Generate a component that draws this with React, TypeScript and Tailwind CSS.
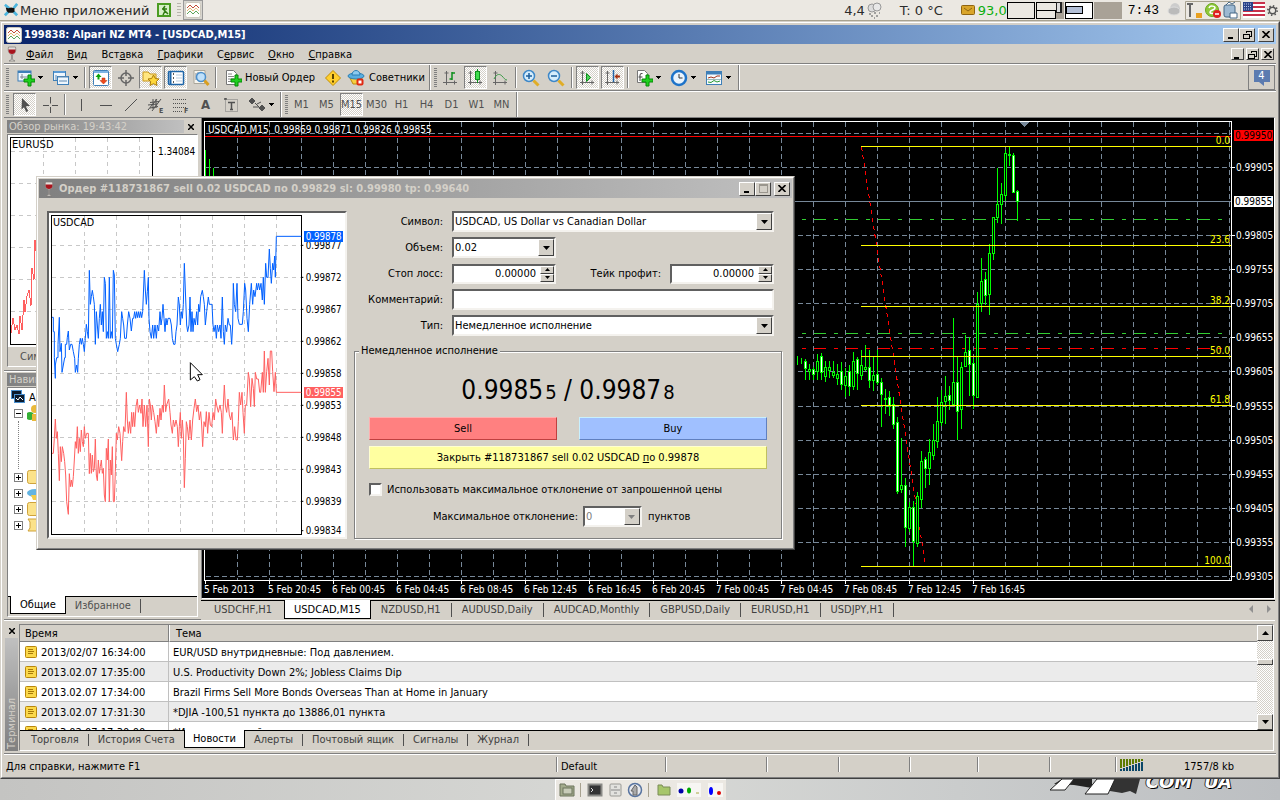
import { useState, type ReactNode } from 'react';
import clsx from 'clsx';

const RAISED = 'border border-t-white border-l-white border-r-[#404040] border-b-[#404040] bg-[#d4d0c8]';
const SUNKEN = 'border border-t-[#808080] border-l-[#808080] border-r-white border-b-white';
const FIELD = 'border-2 border-t-[#606060] border-l-[#606060] border-r-[#f4f2ee] border-b-[#f4f2ee] bg-white';
const CHECKER = 'bg-[repeating-conic-gradient(#fff_0_25%,#d4d0c8_0_50%)] bg-[length:2px_2px]';

const MENU = [
  ['', 'Ф', 'айл'],
  ['', 'В', 'ид'],
  ['Вст', 'а', 'вка'],
  ['', 'Г', 'рафики'],
  ['С', 'е', 'рвис'],
  ['', 'О', 'кно'],
  ['', 'С', 'правка'],
];

const TIMEFRAMES = ['M1', 'M5', 'M15', 'M30', 'H1', 'H4', 'D1', 'W1', 'MN'];

const CHART_TABS = ['USDCHF,H1', 'USDCAD,M15', 'NZDUSD,H1', 'AUDUSD,Daily', 'AUDCAD,Monthly', 'GBPUSD,Daily', 'EURUSD,H1', 'USDJPY,H1'];

const TERMINAL_TABS = ['Торговля', 'История Счета', 'Новости', 'Алерты', 'Почтовый ящик', 'Сигналы', 'Журнал'];

const NEWS = [
  { time: '2013/02/07 16:34:00', title: 'EUR/USD внутридневные: Под давлением.' },
  { time: '2013.02.07 17:35:00', title: 'U.S. Productivity Down 2%; Jobless Claims Dip' },
  { time: '2013.02.07 17:34:00', title: 'Brazil Firms Sell More Bonds Overseas Than at Home in January' },
  { time: '2013.02.07 17:31:30', title: '*DJIA -100,51 пункта до 13886,01 пункта' },
  { time: '2013.02.07 17:30:00', title: '*Индекс деловой активности' },
];

// x, high, low, body top, body bottom, filled
const CANDLES: [number, number, number, number, number, number][] = [
  [797, 356, 365, 361, 361, 0], [801, 358, 364, 360, 360, 0], [805, 359, 380, 361, 368, 1], [809, 364, 380, 369, 371, 0],
  [813, 367, 380, 369, 374, 1], [817, 354, 380, 361, 371, 0], [821, 353, 380, 356, 372, 1], [825, 361, 382, 367, 376, 0],
  [829, 361, 378, 367, 370, 0], [833, 361, 378, 372, 375, 0], [837, 364, 385, 374, 378, 0], [841, 362, 390, 371, 384, 1],
  [845, 368, 397, 376, 385, 0], [849, 365, 396, 371, 386, 1], [853, 352, 390, 361, 386, 0], [857, 357, 390, 359, 373, 1],
  [861, 350, 380, 365, 375, 0], [865, 345, 371, 367, 369, 0], [869, 350, 388, 367, 380, 1], [873, 356, 391, 375, 380, 0],
  [877, 350, 385, 374, 382, 1], [881, 378, 427, 382, 394, 1], [885, 389, 414, 398, 399, 0], [889, 391, 416, 397, 406, 1],
  [893, 397, 429, 404, 424, 1], [897, 417, 494, 422, 491, 1], [901, 438, 493, 485, 489, 0], [905, 478, 547, 485, 527, 1],
  [909, 502, 532, 507, 528, 0], [913, 501, 567, 507, 541, 1], [917, 492, 547, 496, 543, 0], [921, 451, 508, 461, 499, 0],
  [925, 457, 488, 459, 468, 1], [929, 439, 485, 452, 468, 0], [933, 424, 460, 440, 455, 0], [937, 397, 448, 421, 441, 0],
  [941, 390, 426, 402, 422, 0], [945, 376, 424, 396, 401, 0], [949, 386, 410, 395, 400, 1], [953, 318, 405, 382, 404, 0],
  [957, 356, 440, 382, 411, 1], [961, 362, 429, 367, 409, 0], [965, 335, 366, 352, 366, 0], [969, 337, 396, 350, 364, 1],
  [973, 359, 409, 363, 395, 1], [977, 292, 397, 304, 397, 0], [981, 258, 312, 281, 303, 0], [985, 272, 305, 279, 295, 1],
  [989, 244, 315, 253, 294, 0], [993, 217, 260, 217, 253, 0], [997, 168, 223, 204, 217, 0], [1001, 183, 224, 194, 204, 0],
  [1005, 150, 201, 153, 195, 0], [1009, 146, 166, 154, 155, 0], [1013, 153, 193, 155, 192, 1], [1017, 190, 221, 191, 201, 1],
];

const PRICES: [string, number][] = [
  ['0.99905', 167], ['0.99805', 235], ['0.99755', 269], ['0.99705', 303], ['0.99655', 337], ['0.99605', 371],
  ['0.99555', 406], ['0.99505', 440], ['0.99455', 474], ['0.99405', 508], ['0.99355', 542], ['0.99305', 576],
];

const FIBO: [string, number][] = [['0.0', 146], ['23.6', 245], ['38.2', 306], ['50.0', 356], ['61.8', 405], ['100.0', 566]];

const DATES = [
  '5 Feb 2013', '5 Feb 20:45', '6 Feb 00:45', '6 Feb 04:45', '6 Feb 08:45', '6 Feb 12:45', '6 Feb 16:45',
  '6 Feb 20:45', '7 Feb 00:45', '7 Feb 04:45', '7 Feb 08:45', '7 Feb 12:45', '7 Feb 16:45',
];

const ASK = '36,427 40,427 40,470 43,470 43,548 46,610 46,570 50,548 54,548 54,508 58,427 60,530 64,505 66,592 70,570 74,548 76,548 76,508 80,508 82,487 85,468 88,525 92,508 96,508 100,530 104,550 106,592 110,570 113,592 115,550 118,508 121,490 124,508 127,490 130,508 133,530 136,490 139,448 142,470 145,490 148,286 151,388 154,365 157,346 160,365 163,388 166,508 169,410 172,450 175,490 178,430 181,388 184,450 187,410 190,470 193,307 196,325 199,490 202,470 205,490 208,307 211,490 214,470 217,490 220,286 223,300 226,490 229,508 233,530 238,508 241,490 245,410 248,430 251,450 254,490 259,490 262,450 266,410 270,430 274,468 278,430 281,430 284,410 287,430 290,410 293,428 296,410 299,428 302,410 305,428 308,410 313,286 316,345 319,388 322,350 325,307 327,430 330,470 334,490 338,450 341,490 345,450 349,490 352,450 356,468 360,410 363,450 366,430 369,388 372,430 375,470 378,430 381,450 384,430 390,430 394,450 397,490 401,508 405,508 408,470 411,450 415,366 418,390 421,450 424,410 427,430 430,388 433,265 436,345 440,450 443,470 447,450 450,366 453,470 456,410 459,470 462,430 466,450 470,410 473,450 476,388 479,410 482,365 487,346 490,365 493,388 496,450 500,410 505,366 508,388 516,388 519,450 522,470 526,450 529,490 532,450 536,470 540,450 543,490 547,366 550,470 553,508 556,450 560,470 564,430 568,450 571,450 575,508 578,450 580,325 583,388 587,410 591,325 594,430 598,448 607,448 610,410 614,325 617,345 621,430 625,470 629,388 634,325 638,388 641,345 645,365 650,325 652,345 656,325 659,345 663,325 667,375 670,307 673,388 677,265 680,307 684,307 688,222 691,280 694,325 698,265 701,285 704,243 706,307 709,184 784,184';

const BID = '36,835 40,835 43,790 46,732 49,790 52,770 55,835 58,917 61,815 64,860 67,815 71,835 74,860 77,900 80,980 85,1018 88,896 91,935 94,915 97,935 100,905 103,855 106,800 109,820 112,755 115,835 118,790 121,830 124,765 127,800 130,815 133,755 136,790 140,775 145,775 148,896 151,835 154,895 157,840 160,890 163,880 166,792 169,900 172,917 175,855 178,895 181,875 184,855 187,895 190,880 193,960 196,980 199,820 202,855 205,792 208,980 211,855 214,900 217,815 220,980 223,980 226,890 229,775 232,795 236,755 240,775 245,857 248,800 251,755 255,770 259,652 262,735 265,775 268,740 272,775 275,712 278,755 281,712 284,755 288,695 292,672 295,712 299,690 303,715 306,672 309,755 313,690 317,755 321,690 325,815 328,672 331,690 334,735 337,690 341,712 345,740 349,775 353,720 356,755 360,700 363,735 367,690 370,712 373,630 377,710 380,690 386,672 390,712 393,750 397,775 400,735 404,755 408,735 412,755 415,815 418,755 421,712 424,790 427,735 430,780 433,938 436,850 439,740 442,755 446,795 450,735 454,795 458,735 462,700 466,672 470,710 474,690 478,735 482,710 485,750 488,815 492,740 496,755 499,710 503,775 507,712 511,750 515,755 519,712 523,735 527,672 530,690 535,712 540,690 544,712 547,775 550,690 553,630 556,690 560,712 564,672 568,720 572,735 576,712 580,795 584,755 588,795 592,795 595,740 598,652 602,690 606,652 609,712 613,775 616,690 620,690 625,592 628,612 632,695 636,610 640,640 643,695 646,592 650,612 655,612 659,652 662,652 667,592 670,652 673,528 676,652 680,590 684,550 688,630 691,528 695,528 698,590 702,650 706,592 709,652 784,652';

function Svg({ children, size = 18 }: { children: ReactNode; size?: number }) {
  return (
    <svg width={size} height={size} viewBox="0 0 18 18" fill="none" className="shrink-0" aria-hidden="true">
      {children}
    </svg>
  );
}

const PLUS = <path d="M11 6h3v4h4v3h-4v4h-3v-4H7v-3h4z" fill="#1fd01f" stroke="#078a07" />;

const icons: Record<string, ReactNode> = {
  newChart: <Svg><rect x="1" y="2" width="13" height="10" fill="#eef6fd" stroke="#3e7fb8" /><path d="M1 3h13" stroke="#3e7fb8" strokeWidth="2" /><path d="M3 8h8M5 5v5" stroke="#7e8790" />{PLUS}</Svg>,
  profiles: <Svg><rect x="1.500" y="2.500" width="12" height="9" fill="#eef6fd" stroke="#3e7fb8" /><path d="M2 3h11" stroke="#5c9bd5" strokeWidth="2" /><rect x="5.500" y="7.500" width="11" height="8" fill="#eef6fd" stroke="#3e7fb8" /><path d="M6 8h10M4 6v5M7 12h8" stroke="#5c88b0" /></Svg>,
  market: <Svg><rect x="1.500" y="1.500" width="15" height="15" rx="1" fill="#fff" stroke="#3e7fb8" /><path d="M2 3h14" stroke="#7db4e4" strokeWidth="2" /><path d="M6.500 4.500l3 3.500h-2v2.500h-2V8h-2z" fill="#0ba30b" /><path d="M11.500 15l3.500-3.500h-2V9h-3v2.500H8z" fill="#f04a1c" stroke="#b32d08" strokeWidth=".5" /></Svg>,
  target: <Svg><circle cx="9" cy="9" r="5" stroke="#666" strokeWidth="1.500" /><path d="M9 1v6M9 11v6M1 9h6M11 9h6" stroke="#666" strokeWidth="1.500" /></Svg>,
  favorites: <Svg><path d="M1 3h5l2 2h6v7H1z" fill="#ffe680" stroke="#c9971b" /><path d="M11.500 6l1.800 3.500 3.700.500-2.700 2.600.700 3.900-3.500-1.800L8 16.500l.700-3.900L6 10l3.700-.500z" fill="#ffd83a" stroke="#a97a08" /></Svg>,
  terminal: <Svg><rect x="1.500" y="2.500" width="15" height="13" rx="1" fill="#fff" stroke="#1d65a8" strokeWidth="1.500" /><path d="M3.500 3v12" stroke="#1d65a8" strokeWidth="2" /><path d="M6 5h1M6 9h1M6 13h1" stroke="#222" strokeWidth="1.500" /><path d="M9 6h6M9 9h6M9 12h6" stroke="#b9cde0" /></Svg>,
  tester: <Svg><path d="M2 1.500h11v13H2z" fill="#f7f5ee" stroke="#aaa69a" /><path d="M4 4v7M6 3v4" stroke="#7e8790" /><circle cx="9" cy="8" r="4.500" fill="#bfe0fa" stroke="#4b8fcc" strokeWidth="1.500" /><path d="M12.500 11.500l4 4.500" stroke="#d99e1e" strokeWidth="3" /></Svg>,
  order: <Svg><path d="M2.500 1.500h7l3 3v11h-10z" fill="#fff" stroke="#777" /><path d="M4 5h4M4 7.500h6M4 10h6M4 12.500h4" stroke="#888" />{PLUS}</Svg>,
  warn: <Svg><path d="M9 1.500L16.500 9 9 16.500 1.500 9z" fill="#ffcf2e" stroke="#c48f00" strokeLinejoin="round" /><path d="M9 5v5M9 11.500v2" stroke="#5b4300" strokeWidth="2" /></Svg>,
  experts: <Svg><path d="M3 9h12l-2 6H6z" fill="#f6cf3f" stroke="#b98a0d" /><ellipse cx="9" cy="7" rx="8" ry="3" fill="#58aee0" stroke="#2d7fb4" /><path d="M5 6c0-6 8-6 8 0z" fill="#8ccbf0" stroke="#2d7fb4" /><rect x="9.500" y="9.500" width="7" height="7" rx="2" fill="#e02a12" /><rect x="11.500" y="11.500" width="3" height="3" fill="#fff" /></Svg>,
  bars: <Svg><path d="M5.500 2v14M2 13.500h14M3.500 4h4M13.500 11.500v4" stroke="#666" /><path d="M11 3v8M11 4h3M8.500 10H11" stroke="#0c8f1c" strokeWidth="1.500" /></Svg>,
  candles: <Svg><path d="M4.500 2v14M2 13.500h14M2.500 4h4M14 11.500v4" stroke="#666" /><path d="M11.500 0v14" stroke="#0c8f1c" /><rect x="9.500" y="2.500" width="4" height="8" fill="#3fdc4d" stroke="#0c8f1c" /></Svg>,
  line: <Svg><path d="M4.500 2v14M2 13.500h14M2.500 4h4M14 11.500v4" stroke="#666" /><path d="M3 10c3-6 6-5 8-3s3 4 5 4" stroke="#3a9a45" /></Svg>,
  zoomIn: <Svg><circle cx="7" cy="7" r="5.500" fill="#d6edfc" stroke="#3e88c8" strokeWidth="1.500" /><path d="M4 7h6M7 4v6" stroke="#1d5f9c" strokeWidth="1.500" /><path d="M11.500 11.500l5 5" stroke="#e0ad27" strokeWidth="3" /></Svg>,
  zoomOut: <Svg><circle cx="7" cy="7" r="5.500" fill="#d6edfc" stroke="#3e88c8" strokeWidth="1.500" /><path d="M4 7h6" stroke="#1d5f9c" strokeWidth="1.500" /><path d="M11.500 11.500l5 5" stroke="#e0ad27" strokeWidth="3" /></Svg>,
  scroll: <Svg><path d="M4.500 2v14M2 13.500h14M2.500 4h4M14 11.500v4" stroke="#666" /><path d="M8.500 4.500v8l4-4z" fill="#4bd457" stroke="#0c8f1c" /></Svg>,
  shift: <Svg><path d="M4.500 2v14M2 13.500h14M2.500 4h4M14 11.500v4" stroke="#666" /><path d="M10.500 1v12" stroke="#2264a8" strokeWidth="1.500" /><path d="M11.500 7.500l3-3v2h2.500v2h-2.500v2z" fill="#a5300f" /></Svg>,
  indicators: <Svg><path d="M2.500 1.500h7l3 3v9h-10z" fill="#fff" stroke="#777" /><path d="M5 12V6q0-2 2.500-1.500M3.500 8h4" stroke="#444" />{PLUS}</Svg>,
  clock: <Svg><circle cx="9" cy="9" r="7" fill="#eaf4fd" stroke="#1d73c9" strokeWidth="2.500" /><path d="M9 5v4h3.500" stroke="#333" /></Svg>,
  template: <Svg><rect x="1.500" y="2.500" width="15" height="13" fill="#f4f9fd" stroke="#3e7fb8" /><path d="M2 4h14" stroke="#3e7fb8" strokeWidth="3" /><path d="M3 9l3-1 3 1 3-2h3" stroke="#a33218" /><path d="M2 10.500h14" stroke="#9bb" /><path d="M3 13l3 .500 3-2 3 1.500 3-1" stroke="#2a9a35" /></Svg>,
  cursor: <Svg><path d="M6 2l8 8-4.200.300 2.400 4.700-2 1-2.200-4.800L5.500 13.500z" fill="#505050" /></Svg>,
  cross: <Svg><path d="M9.500 1v6.500M9.500 11v6M2 9.500h6M11 9.500h6" stroke="#505050" /></Svg>,
  vline: <Svg><path d="M9.500 3v12" stroke="#505050" /></Svg>,
  hline: <Svg><path d="M3 9.500h12" stroke="#505050" /></Svg>,
  trend: <Svg><path d="M3 15L15 3" stroke="#505050" /></Svg>,
  channel: <Svg><path d="M1 14l9-11M5 15l9-12M1 9l9-1M3 6.500l9-1M3 12l8-1.500M6 3v10M9 3v9" stroke="#505050" /><text x="12" y="17" fontSize="7" fontWeight="bold" fill="#505050">E</text></Svg>,
  fibo: <Svg><path d="M1 3.500h14M1 7.500h14M1 11.500h14M1 15.500h9" stroke="#505050" strokeDasharray="1 1" /><text x="12" y="17" fontSize="7" fontWeight="bold" fill="#505050">F</text></Svg>,
  label: <Svg><rect x="3.500" y="3.500" width="12" height="12" stroke="#777" strokeDasharray="1 1" /><path d="M2 3h2v-1M6 6.500h7M9.500 6.500v7M8 13.500h3" stroke="#505050" strokeWidth="1.500" /></Svg>,
  arrows: <Svg><path d="M4 2l3 3-3 3-3-3zM7 7l4 4M14 9l3 3-3 3-3-3z" fill="#505050" stroke="#505050" /><path d="M5 11h6M13 6l-4 2" stroke="#505050" /></Svg>,
};

function Caret() {
  return (
    <svg width="5" height="3" viewBox="0 0 5 3" className="shrink-0" shapeRendering="crispEdges" aria-hidden="true">
      <path d="M0 0h5L2.500 3z" fill="#000" />
    </svg>
  );
}

function Grip() {
  return <span className="my-[3px] w-[3px] shrink-0 self-stretch bg-[repeating-linear-gradient(#808080_0_1px,#d4d0c8_1px_2px)]" />;
}

function Sep() {
  return <span className="mx-px my-0.5 w-[2px] shrink-0 self-stretch border-l border-l-[#808080] border-r border-r-white" />;
}

function End() {
  return <span className="mx-px w-[2px] shrink-0 self-stretch border-l border-l-[#808080] border-r border-r-white" />;
}

function Tool({ icon, label, pressed, children }: { icon?: string; label: string; pressed?: boolean; children?: ReactNode }) {
  return (
    <button
      aria-label={label}
      className={clsx('flex h-[23px] w-[23px] shrink-0 items-center justify-center', pressed && SUNKEN, pressed && CHECKER)}
    >
      {icon && icons[icon]}
      {children}
    </button>
  );
}

function DropTool({ icon, label }: { icon: string; label: string }) {
  return (
    <button aria-label={label} className="flex h-[23px] w-[33px] shrink-0 items-center justify-center gap-[3px]">
      {icons[icon]}
      <Caret />
    </button>
  );
}

function Wine() {
  return (
    <svg width="12" height="16" viewBox="0 0 12 16" className="shrink-0" aria-hidden="true">
      <path d="M2.500 1h7c1 5-1 7-3 7.500v5l2.500 1.500H3l2.500-1.500v-5C3.500 8 1.500 6 2.500 1z" fill="#e4e0dc" stroke="#7d7876" strokeWidth=".7" />
      <path d="M2.500 3.500h7c.300 3-1.500 4.500-3.500 4.500S2.200 6.500 2.500 3.500z" fill="#a8131c" />
    </svg>
  );
}

function WinButtons({ small, middle = 'restore' }: { small?: boolean; middle?: 'restore' | 'max' }) {
  const box = clsx('flex items-center justify-center', RAISED, small ? 'h-3 w-[13px]' : 'h-3.5 w-4');
  return (
    <div className="ml-auto flex shrink-0 items-center">
      <button aria-label="Свернуть" className={clsx(box, small && 'mr-0.5')}>
        <svg width="9" height="9" viewBox="0 0 9 9" shapeRendering="crispEdges"><path d="M1 7h5v2H1z" /></svg>
      </button>
      <button aria-label="Развернуть" className={box}>
        <svg width="9" height="9" viewBox="0 0 9 9" shapeRendering="crispEdges" fill="none">
          {middle === 'restore' ? (
            <path d="M3 1.500h5.500V6H7M3 1v2M.500 4.500h6v4h-6zM0 4h7" stroke="#000" />
          ) : (
            <path d="M.500 .500h8v8h-8zM1 1.500h7" stroke="#9a968e" />
          )}
        </svg>
      </button>
      <button aria-label="Закрыть" className={clsx(box, small ? 'ml-0.5' : 'ml-[3px]')}>
        <svg width="8" height="7" viewBox="0 0 8 7"><path d="M.500 0l7 7M7.500 0l-7 7" stroke="#000" strokeWidth="1.600" /></svg>
      </button>
    </div>
  );
}

function TopPanel() {
  return (
    <header className="flex h-[21px] items-center border-b border-[#a8a290] bg-[#ebe8e2] font-['DejaVu_Sans',sans-serif] text-[13px] text-[#2c2c2c]">
      <svg width="14" height="14" viewBox="0 0 16 16" className="mr-0.5 ml-1 shrink-0" aria-hidden="true">
        <path d="M1 2l5 4M15 1l-4 5M1 14l4-4M15 14l-4-4" stroke="#4cb5dd" strokeWidth="3" />
        <path d="M2 5l3 1 3-1 4 1v4l-2 1H5L3 9z" fill="#111" />
      </svg>
      <button>Меню приложений</button>
      <svg width="14" height="14" viewBox="0 0 14 14" className="ml-2 shrink-0" aria-hidden="true">
        <rect width="14" height="14" fill="#4b9c22" />
        <path d="M2 2h10v10H2z" fill="#d7efc8" />
        <path d="M8 3l-2 3 2 2-2 4M5 6h5M8 8l3 3" stroke="#2f7a10" strokeWidth="1.500" fill="none" />
      </svg>
      <span className="ml-1.5 h-3.5 w-1 bg-[repeating-linear-gradient(#b8b4ac_0_1px,#ebe8e2_1px_3px)]" />
      <span className="ml-0.5 flex h-5 w-5 items-center justify-center border border-[#999] bg-[#d8d6d0]">
        <Logo />
      </span>
      <div className="ml-auto flex items-center pr-0.5">
        <span>4,4</span>
        <svg width="17" height="17" viewBox="0 0 17 17" className="mr-[17px] ml-px" aria-hidden="true">
          <circle cx="6" cy="6" r="4" fill="#ddd" stroke="#999" />
          <circle cx="11" cy="5" r="4" fill="#e8e8e8" stroke="#999" />
          <path d="M3 12h2M8 11h2M13 11h1M5 14h2M10 14h2M8 16h1" stroke="#888" strokeWidth="1.500" />
        </svg>
        <span>T: 0 °C</span>
        <svg width="14" height="10" viewBox="0 0 14 10" className="mr-[3px] ml-[18px]" aria-hidden="true">
          <rect x=".500" y=".500" width="13" height="9" rx="1" fill="#d9a52a" stroke="#8f6410" />
          <path d="M3 3l4 3 4-3" stroke="#8f6410" fill="none" />
        </svg>
        <span className="text-[#0cae0c]">93,0</span>
        <svg width="115" height="18" viewBox="0 0 115 18" shapeRendering="crispEdges" aria-hidden="true">
          <path d="M.500 1h27v16H.500z" fill="#ebe8e2" stroke="#000" />
          <path d="M29 1h28v17H29z" fill="#a9a297" />
          <path d="M29.500 1.500h20v8h-20zM29.500 9.500h19v8h-19z" fill="#ebe8e2" stroke="#000" />
          <path d="M49 1h6v11h-6z" fill="#222" />
          <path d="M50 2h3v9h-3z" fill="#ddd" />
          <path d="M58.500 1h27v16h-27z" fill="#fff" stroke="#000" />
          <path d="M59.500 5.500h16v7h-16z" fill="#b3bfd6" stroke="#000" />
          <path d="M87 1h28v17H87z" fill="#a9a297" />
        </svg>
        <time className="mr-2 ml-1.5 font-['Liberation_Mono',monospace] text-[13px] text-black">7:43</time>
        <svg width="14" height="14" viewBox="0 0 14 14" aria-hidden="true">
          <ellipse cx="8" cy="6" rx="5" ry="6" fill="#ccc" />
          <ellipse cx="7" cy="8" rx="6" ry="4" fill="#bbb" stroke="#ddd" />
        </svg>
        <svg width="56" height="19" viewBox="0 0 56 19" className="ml-1" aria-hidden="true">
          <path d="M.500 .500h55v18H.500z" fill="none" stroke="#a8a290" />
          <path d="M2 3h6M5 3v13" stroke="#666" strokeWidth="2" />
          <rect x="11" y="12" width="6" height="5" fill="#e8a020" />
          <circle cx="27" cy="9" r="6.500" fill="#8fc93a" stroke="#6aa51e" />
          <path d="M24 7c1-3 6-2 6 0s-5 2-5 4 4 2 5 0" stroke="#fff" strokeWidth="1.500" fill="none" />
          <circle cx="32" cy="13" r="4" fill="#e02020" />
          <path d="M30 13h4" stroke="#fff" strokeWidth="1.500" />
          <rect x="39" y="4" width="11" height="12" rx="2" fill="#9db9d2" stroke="#456784" />
          <path d="M41 4l3-3 3 2 3-2M45 17v-5h7v5z" stroke="#456784" fill="#fff" />
        </svg>
        <svg width="22" height="16" viewBox="0 0 22 16" className="ml-0.5" aria-hidden="true">
          <rect width="22" height="16" fill="#fff" />
          <path d="M0 1h22M0 5h22M0 9h22M0 13h22" stroke="#c8304a" strokeWidth="2" />
          <rect width="10" height="9" fill="#2a4288" />
          <path d="M1 2h8M1 4.500h8M1 7h8" stroke="#b9c4e4" strokeDasharray="1 1" />
        </svg>
        <svg width="11" height="11" viewBox="0 0 12 12" className="ml-0.5" aria-hidden="true">
          <circle cx="6" cy="6" r="3.500" fill="none" stroke="#555" strokeWidth="1.500" />
          <circle cx="6" cy="6" r="5" fill="none" stroke="#555" strokeWidth="2" strokeDasharray="1.500 2.400" />
        </svg>
      </div>
    </header>
  );
}

function Logo() {
  return (
    <svg width="16" height="16" viewBox="0 0 16 16" className="shrink-0" aria-hidden="true">
      <rect x=".500" y=".500" width="15" height="15" rx="2" fill="#fdfdfa" stroke="#ccc8bd" />
      <path d="M2 6l3-3 3 3 3-3 3 3" stroke="#c04a35" fill="none" />
      <path d="M2 9l3-3 3 3 3-3 3 3" stroke="#d8963c" fill="none" strokeDasharray="1 .500" />
      <path d="M2 12l3-3 3 3 3-3 3 3" stroke="#5ba35b" fill="none" />
    </svg>
  );
}

function Toolbars() {
  return (
    <>
      <div className="flex h-[27px] items-center border-t border-[#808080] shadow-[inset_0_1px_#fff] pt-px">
        <div className="flex items-center gap-0.5 self-stretch pl-0.5">
          <Grip />
          <span />
          <DropTool icon="newChart" label="Новый график" />
          <DropTool icon="profiles" label="Профили" />
          <Sep />
          <Tool icon="market" label="Обзор рынка" pressed />
          <Tool icon="target" label="Окно данных" />
          <Tool icon="favorites" label="Навигатор" pressed />
          <Tool icon="terminal" label="Терминал" pressed />
          <Tool icon="tester" label="Тестер стратегий" />
          <Sep />
          <button className="flex h-[23px] items-center gap-[3px] px-1 whitespace-nowrap">
            {icons.order}
            Новый Ордер
          </button>
          <Tool icon="warn" label="MetaEditor" />
          <button className="flex h-[23px] items-center gap-1 px-px whitespace-nowrap">
            {icons.experts}
            Советники
          </button>
          <End />
          <Grip />
          <Tool icon="bars" label="Бары" />
          <Tool icon="candles" label="Свечи" pressed />
          <Tool icon="line" label="Линия" />
          <Sep />
          <Tool icon="zoomIn" label="Увеличить" />
          <Tool icon="zoomOut" label="Уменьшить" />
          <Sep />
          <Tool icon="scroll" label="Автопрокрутка" pressed />
          <Tool icon="shift" label="Сдвиг графика" pressed />
          <Sep />
          <DropTool icon="indicators" label="Индикаторы" />
          <DropTool icon="clock" label="Периоды" />
          <DropTool icon="template" label="Шаблоны" />
          <End />
        </div>
        <button aria-label="Сообщения" className="mr-px ml-auto flex h-[25px] w-[27px] items-center justify-center border border-[#808080]">
          <span className="flex flex-col items-center">
            <span className="flex h-3 w-4 items-center justify-center bg-[#5b7bb0] text-[11px] text-white">4</span>
            <svg width="6" height="4" viewBox="0 0 6 4"><path d="M0 0h5v4z" fill="#5b7bb0" /></svg>
          </span>
        </button>
      </div>
      <div className="flex h-[27px] items-center gap-0.5 border-t border-[#808080] pt-px pl-0.5 text-[#505050] shadow-[inset_0_1px_#fff]">
        <Grip />
        <span />
        <Tool icon="cursor" label="Курсор" pressed />
        <Tool icon="cross" label="Перекрестие" />
        <Sep />
        <Tool icon="vline" label="Вертикальная линия" />
        <Tool icon="hline" label="Горизонтальная линия" />
        <Tool icon="trend" label="Трендовая линия" />
        <Tool icon="channel" label="Канал" />
        <Tool icon="fibo" label="Линии Фибоначчи" />
        <Tool label="Текст"><span className="text-[13px] font-bold">A</span></Tool>
        <Tool icon="label" label="Метка" />
        <DropTool icon="arrows" label="Стрелки" />
        <End />
        <Grip />
        {TIMEFRAMES.map(tf => (
          <Tool key={tf} label={tf} pressed={tf === 'M15'}>{tf}</Tool>
        ))}
        <End />
      </div>
    </>
  );
}

function DockTitle({ children, close }: { children: ReactNode; close?: boolean }) {
  return (
    <div className="flex h-[13px] items-center">
      <h2 className="h-full flex-1 bg-linear-to-r from-[#808080] to-[#c0c0c0] pl-0.5 leading-[13px] text-[#d4d0c8]">{children}</h2>
      <button aria-label="Закрыть" className="flex w-3.5 justify-center">
        {close && <svg width="6" height="6" viewBox="0 0 6 6"><path d="M0 0l6 6M6 0L0 6" stroke="#000" strokeWidth="1.500" /></svg>}
      </button>
    </div>
  );
}

function MarketWatch() {
  return (
    <section className="flex flex-col gap-px">
      <DockTitle close>Обзор рынка: 19:43:42</DockTitle>
      <div className={SUNKEN}>
        <svg viewBox="8 135 189 212" className="block h-[212px] w-full bg-white" shapeRendering="crispEdges">
          <path d="M43.500 138v206M75.500 138v206M107.500 138v206M139.500 138v206M11 151.500h141M11 183.500h141M11 215.500h141M11 247.500h141M11 279.500h141M11 311.500h141" stroke="#c8c8c8" strokeDasharray="4 4" fill="none" />
          <rect x="10.500" y="137.500" width="142" height="207" fill="none" stroke="#000" />
          <polyline points="11,333 13,318 15,330 17,325 19,334 20,316 22,330 24,300 25,312 27,296 29,290 31,306 32,268 34,280 35,240 37,262" fill="none" stroke="#ff6060" />
          <path d="M152 151.500h3" stroke="#000" />
          <text x="12" y="148" fontSize="11">EURUSD</text>
          <text x="158" y="155" fontSize="10">1.34084</text>
        </svg>
        <div className="h-[19px] pt-0.5 pl-3 text-[#505050]">Символы</div>
      </div>
    </section>
  );
}

function TreeNode({ open, children }: { open?: boolean; children: ReactNode }) {
  return (
    <li className="flex h-4 items-center gap-1">
      <span className="flex h-[9px] w-[9px] items-center justify-center border border-[#808080] bg-white">
        <svg width="5" height="5" viewBox="0 0 5 5"><path d={open ? 'M0 2.500h5' : 'M0 2.500h5M2.500 0v5'} stroke="#000" /></svg>
      </span>
      <svg width="16" height="16" viewBox="0 0 16 16" aria-hidden="true">{children}</svg>
    </li>
  );
}

function Navigator() {
  return (
    <section className="flex flex-1 flex-col gap-px">
      <DockTitle>Навигатор</DockTitle>
      <div className={clsx('flex flex-1 flex-col', SUNKEN)}>
        <div className="flex-1 bg-white pt-px pl-[3px]">
          <div className="flex h-4 items-center gap-1">
            <svg width="14" height="14" viewBox="0 0 14 14" aria-hidden="true">
              <rect x=".500" y=".500" width="10" height="8" fill="#0c1a2c" stroke="#4a90cf" />
              <rect x="3.500" y="4.500" width="10" height="8" fill="#0c1a2c" stroke="#4a90cf" />
              <path d="M5 8l2 2 2-3 3 3" stroke="#fff" fill="none" />
            </svg>
            Alpari NZ MT4
          </div>
          <ul className="ml-[3px]">
            <TreeNode open><circle cx="8" cy="4" r="4" fill="#e9b93a" /><circle cx="3" cy="11" r="4" fill="#35b035" /><path d="M5 9h10v7H5z" fill="#e9b93a" /></TreeNode>
            <li className="ml-1 h-12 border-l border-dotted border-[#808080]" />
            <TreeNode><rect x=".500" y="1.500" width="14" height="13" rx="2" fill="#fbe28a" stroke="#cfa23a" /></TreeNode>
            <TreeNode><ellipse cx="8" cy="8" rx="8" ry="4" fill="#63b4e2" /><path d="M4 10h9l-2 5H6z" fill="#f3cd4a" /></TreeNode>
            <TreeNode><rect x=".500" y="1.500" width="14" height="13" rx="2" fill="#fbe28a" stroke="#cfa23a" /></TreeNode>
            <TreeNode><path d="M1 2h12l-2 3v6l2 3H1l2-3V5z" fill="#fbe28a" stroke="#cfa23a" /></TreeNode>
          </ul>
        </div>
        <div role="tablist" className="flex h-5 items-start border-t border-black pl-0.5">
          <button role="tab" aria-selected className="-mt-px h-[18px] border border-t-0 border-black bg-white px-[9px]">Общие</button>
          <button role="tab" className="mt-0.5 border-r border-[#505050] px-[9px] leading-3.5 text-[#505050]">Избранное</button>
        </div>
      </div>
    </section>
  );
}

function PriceChart() {
  return (
    <svg viewBox="202 118 1072 480" preserveAspectRatio="xMinYMin meet" className="block w-full flex-1 bg-black" shapeRendering="crispEdges" fontSize="11">
      <g stroke="#778899" strokeDasharray="5 3" fill="none">
        {Array.from({ length: 32 }, (_, i) => <path key={i} d={`M${237.5 + i * 32} 122v458`} />)}
        {[133, ...PRICES.map(p => p[1])].map(y => <path key={y} d={`M206 ${y + 0.5}h1025`} />)}
      </g>
      <path d="M205 201.500h1026" stroke="#778899" />
      <path d="M205 136.500h1026" stroke="#f00" />
      <path d="M205.500 150v40M209.500 159v30M213.500 168v30" stroke="#0f0" />
      <path d="M782 219.500h448M782 333.500h448" stroke="#32cd32" strokeDasharray="12 8 4 8" />
      <path d="M782 348.500h448" stroke="#f00" strokeDasharray="12 8 4 8" />
      <path d="M861.500 147L925.500 566" stroke="#f00" strokeDasharray="4 4" />
      {CANDLES.map(([x, high, low, top, bottom, filled]) => (
        <g key={x}>
          <path d={`M${x + 0.5} ${high}V${low}`} stroke="#0f0" />
          <rect x={x - 0.5} y={top + 0.5} width="2" height={bottom - top} fill={filled ? '#fff' : '#000'} stroke="#0f0" />
        </g>
      ))}
      {FIBO.map(([name, y]) => (
        <g key={name}>
          <path d={`M861 ${y + 0.5}h370`} stroke="#ff0" />
          <text x="1230" y={y - 2} fill="#ff0" textAnchor="end" fontSize="10">{name}</text>
        </g>
      ))}
      <path d="M204.500 580V121.500H1231.500V580.500H204" stroke="#fff" fill="none" />
      <path d="M1019 122h11l-5.500 5z" fill="#778899" />
      <path d="M206 133.500h3" stroke="#778899" />
      <g fill="#fff">
        <text x="208" y="133" fontSize="10">USDCAD,M15&#160; 0.99869 0.99871 0.99826 0.99855</text>
        {PRICES.map(([p, y]) => (
          <g key={p}>
            <path d={`M1232 ${y + 0.5}h3`} stroke="#fff" />
            <text x="1236" y={y + 4} fontSize="10">{p}</text>
          </g>
        ))}
        {DATES.map((d, i) => (
          <g key={d}>
            <path d={`M${205.5 + i * 64} 581v3`} stroke="#fff" />
            <text x={204 + i * 64} y="593" fontSize="10">{d}</text>
          </g>
        ))}
      </g>
      <rect x="1234" y="130" width="39" height="11" fill="#f00" />
      <text x="1235" y="139" fontSize="10">0.99950</text>
      <rect x="1234" y="196" width="39" height="11" fill="#fff" />
      <text x="1235" y="205" fontSize="10">0.99855</text>
    </svg>
  );
}

function ChartTabs() {
  return (
    <div role="tablist" className="mt-px flex h-[21px] items-start border-t border-b border-t-black border-b-white pl-[3px] text-[#404040]">
      {CHART_TABS.map((tab, i) => (
        <button
          key={tab}
          role="tab"
          aria-selected={i === 1}
          className={
            i === 1
              ? '-mt-px ml-0.5 h-[19px] border border-t-0 border-black bg-white px-[9px] text-black'
              : clsx('mt-0.5 px-[10px] leading-3.5', i > 1 && 'border-r border-[#505050]')
          }
        >
          {tab}
        </button>
      ))}
      <span className="mt-1 mr-1 ml-auto flex gap-3">
        <svg width="5" height="8" viewBox="0 0 5 8"><path d="M4 0v8L0 4z" fill="#909090" /></svg>
        <svg width="5" height="8" viewBox="0 0 5 8"><path d="M1 0v8l4-4z" fill="#909090" /></svg>
      </span>
    </div>
  );
}

function NoteIcon() {
  return (
    <svg width="12" height="12" viewBox="0 0 12 12" aria-hidden="true">
      <rect x=".500" y=".500" width="11" height="11" rx="1" fill="#fbd84a" stroke="#b8860b" />
      <path d="M3 3.500h5M3 5.500h6M3 7.500h5" stroke="#a87a08" />
    </svg>
  );
}

function ScrollBar() {
  const btn = clsx('flex h-4 w-4 items-center justify-center', RAISED);
  return (
    <div className={clsx('flex w-4 shrink-0 flex-col', CHECKER)}>
      <button aria-label="Вверх" className={btn}>
        <svg width="7" height="4" viewBox="0 0 7 4"><path d="M0 4h7L3.500 0z" /></svg>
      </button>
      <div className={clsx('mt-[18px] h-[6px]', RAISED)} />
      <button aria-label="Вниз" className={clsx(btn, 'mt-auto')}>
        <svg width="7" height="4" viewBox="0 0 7 4"><path d="M0 0h7L3.500 4z" /></svg>
      </button>
    </div>
  );
}

function Terminal() {
  return (
    <section className="flex h-[132px] gap-px pt-[3px] pr-0.5 pb-0.5">
      <div className="flex w-3.5 shrink-0 flex-col items-center pl-px">
        <button aria-label="Закрыть" className="flex h-3.5 items-center">
          <svg width="6" height="6" viewBox="0 0 6 6"><path d="M0 0l6 6M6 0L0 6" stroke="#000" strokeWidth="1.500" /></svg>
        </button>
        <h2 className="w-[13px] flex-1 rotate-180 bg-linear-to-t from-[#c0c0c0] to-[#808080] pt-0.5 leading-[13px] text-[#d4d0c8] [writing-mode:vertical-rl]">
          Терминал
        </h2>
      </div>
      <div className={clsx('flex min-w-0 flex-1 flex-col', SUNKEN)}>
        <div className="flex h-[105px] overflow-hidden bg-white">
          <table className="h-min flex-1 table-fixed border-separate border-spacing-0 text-left">
            <thead>
              <tr className="bg-[#d4d0c8]">
                <th className="h-[17px] w-[149px] border-r border-b border-[#808080] pl-[5px] font-normal">Время</th>
                <th className="border-b border-l border-[#808080] border-l-white pl-1.5 font-normal">Тема</th>
              </tr>
            </thead>
            <tbody>
              {NEWS.map((n, i) => (
                <tr key={n.time} className={i % 2 ? 'bg-[#ebebeb]' : 'bg-white'}>
                  <td className="h-5 border-r border-b border-[#c0c0c0] pt-px pl-[5px]">
                    <span className="flex items-center gap-1"><NoteIcon />{n.time}</span>
                  </td>
                  <td className="truncate border-b border-[#c0c0c0] pt-px pl-1">{n.title}</td>
                </tr>
              ))}
            </tbody>
          </table>
          <ScrollBar />
        </div>
        <div role="tablist" className="flex flex-1 items-start border-t border-black pl-0.5 text-[#404040]">
          {TERMINAL_TABS.map((tab, i) => (
            <button
              key={tab}
              role="tab"
              aria-selected={i === 2}
              className={
                i === 2
                  ? '-mt-px h-[18px] border border-t-0 border-black bg-white px-2 text-black'
                  : clsx('mt-[3px] px-[9px] leading-3', i !== 1 && 'border-r border-[#505050]')
              }
            >
              {tab}
            </button>
          ))}
        </div>
      </div>
    </section>
  );
}

function StatusBar() {
  const cell = 'shrink-0 border-l border-[#808080] pl-1 shadow-[inset_1px_0_#fff]';
  return (
    <footer className="flex h-[22px] border-t border-[#808080] py-[3px] leading-5 shadow-[inset_0_1px_#fff]">
      <span className="flex-1 pl-0.5">Для справки, нажмите F1</span>
      <span className={clsx(cell, 'w-[109px]')}>Default</span>
      <span className={clsx(cell, 'w-[101px]')} />
      <span className={clsx(cell, 'w-[72px]')} />
      <span className={clsx(cell, 'w-[71px]')} />
      <span className={clsx(cell, 'w-[68px]')} />
      <span className={clsx(cell, 'w-[72px]')} />
      <span className={clsx(cell, 'w-[66px]')} />
      <span className={clsx(cell, 'flex w-[161px] justify-between pr-[42px]')}>
        <svg width="24" height="12" viewBox="0 0 24 12" className="mt-0.5" shapeRendering="crispEdges" aria-hidden="true">
          {Array.from({ length: 8 }, (_, i) => (
            <g key={i}>
              <path d={`M${i * 3 + 1} 0V${9 - i}`} stroke="#5c7a00" strokeWidth="2" />
              <path d={`M${i * 3 + 1} ${10 - i}V12`} stroke="#0a4668" strokeWidth="2" />
            </g>
          ))}
        </svg>
        1757/8 kb
      </span>
    </footer>
  );
}

function Combo({ id, value, className, disabled }: { id: string; value: string; className?: string; disabled?: boolean }) {
  return (
    <div className={clsx('flex h-[21px]', FIELD, disabled && 'bg-[#d4d0c8]', className)}>
      <select id={id} disabled={disabled} className={clsx('min-w-0 flex-1 appearance-none bg-transparent pl-px', disabled && 'text-[#808080]')}>
        <option>{value}</option>
      </select>
      <span className={clsx('pointer-events-none flex w-4 items-center justify-center', RAISED)}>
        <svg width="7" height="4" viewBox="0 0 7 4"><path d="M0 0h7L3.500 4z" fill={disabled ? '#808080' : '#000'} /></svg>
      </span>
    </div>
  );
}

function Spinner({ id }: { id: string }) {
  const [value, setValue] = useState('0.00000');
  return (
    <div className={clsx('flex h-5 w-[104px]', FIELD)}>
      <input id={id} value={value} onChange={e => setValue(e.target.value)} className="w-0 min-w-0 flex-1 bg-transparent pr-1 text-right outline-none" />
      <div className="flex w-3.5 flex-col">
        <button aria-label="Больше" className={clsx('flex flex-1 items-center justify-center', RAISED)}>
          <svg width="5" height="3" viewBox="0 0 5 3"><path d="M0 3h5L2.500 0z" /></svg>
        </button>
        <button aria-label="Меньше" className={clsx('flex flex-1 items-center justify-center', RAISED)}>
          <svg width="5" height="3" viewBox="0 0 5 3"><path d="M0 0h5L2.500 3z" /></svg>
        </button>
      </div>
    </div>
  );
}

function TickChart() {
  const labels: [string, number][] = [
    ['0.99877', 211], ['0.99872', 307], ['0.99867', 403], ['0.99862', 499], ['0.99858', 595],
    ['0.99853', 691], ['0.99848', 787], ['0.99843', 883], ['0.99839', 979], ['0.99834', 1067],
  ];
  return (
    <svg width="296" height="324" viewBox="27 114 888 972" className="block bg-white" fontSize="29">
      <g shapeRendering="crispEdges" fill="none" strokeWidth="3">
        <g stroke="#c8c8c8" strokeDasharray="12 12">
          {[133, 229, 325, 421, 517, 613, 709].map(x => <path key={x} d={`M${x + 0.5} 123v954`} />)}
          {labels.slice(0, 9).map(([p, y]) => <path key={p} d={`M36 ${y + 0.5}h748`} />)}
        </g>
        <rect x="34.500" y="121.500" width="750" height="957" stroke="#000" />
      </g>
      <g fill="none" strokeWidth="3">
        <polyline points={ASK} stroke="#0060ff" />
        <polyline points={BID} stroke="#ff6060" />
      </g>
      <text x="39" y="153" fontSize="32">USDCAD</text>
      {labels.map(([p, y]) => (
        <g key={p}>
          <path d={`M786 ${y}h4`} stroke="#000" strokeWidth="3" />
          <text x="797" y={y + 11}>{p}</text>
        </g>
      ))}
      <rect x="792" y="168" width="117" height="33" fill="#0060ff" />
      <text x="797" y="195" fill="#fff">0.99878</text>
      <rect x="792" y="636" width="117" height="33" fill="#ff6060" />
      <text x="797" y="663" fill="#fff">0.99855</text>
      <path d="M451 563v52l12-10 9 13 8-4-7-15h14z" fill="#fff" stroke="#000" strokeWidth="3" />
    </svg>
  );
}

function OrderDialog() {
  const [limit, setLimit] = useState(false);
  return (
    <div role="dialog" aria-label="Ордер" className="absolute top-44 left-9 z-10 h-[374px] w-[759px] border border-[#d4d0c8] border-r-[#404040] border-b-[#404040] bg-[#d4d0c8]">
      <div className="flex h-full flex-col border border-white border-r-[#808080] border-b-[#808080] p-px">
        <div className="flex h-[19px] items-center bg-linear-to-r from-[#808080] to-[#c0c0c0] pr-0.5 pl-1 font-bold text-[#d4d0c8]">
          <Wine />
          <h1 className="ml-1">Ордер #118731867 sell 0.02 USDCAD по 0.99829 sl: 0.99980 tp: 0.99640</h1>
          <WinButtons middle="max" />
        </div>
        <div className="flex gap-[7px] pt-[13px] pl-2">
          <div className="h-[328px] w-[300px] shrink-0 border-2 border-t-[#606060] border-r-[#f4f2ee] border-b-[#f4f2ee] border-l-[#606060]">
            <TickChart />
          </div>
          <form className="w-[428px]" onSubmit={e => e.preventDefault()}>
            <div className="grid grid-cols-[89px_1fr] items-center gap-x-[9px] gap-y-[5px] pr-2 text-right">
              <label htmlFor="symbol">Символ:</label>
              <Combo id="symbol" value="USDCAD, US Dollar vs Canadian Dollar" />
              <label htmlFor="volume">Объем:</label>
              <Combo id="volume" value="0.02" className="w-[104px]" />
              <label htmlFor="sl">Стоп лосс:</label>
              <div className="flex h-[21px] items-center gap-[9px]">
                <Spinner id="sl" />
                <label htmlFor="tp" className="flex-1">Тейк профит:</label>
                <Spinner id="tp" />
              </div>
              <label htmlFor="comment">Комментарий:</label>
              <input id="comment" className={clsx('h-[21px] w-full outline-none', FIELD)} />
              <label htmlFor="type">Тип:</label>
              <Combo id="type" value="Немедленное исполнение" />
            </div>
            <fieldset className="mt-2 h-[195px] border border-[#808080] px-3.5 shadow-[1px_1px_#fff,inset_1px_1px_#fff]">
              <legend className="-ml-2.5 bg-[#d4d0c8] px-0.5 leading-3.5">Немедленное исполнение</legend>
              <p className="mt-3.5 text-center text-[26px] leading-9">
                0.9985<span className="ml-0.5 text-xl">5</span> / 0.9987<span className="ml-0.5 text-xl">8</span>
              </p>
              <div className="mt-[9px] flex gap-[22px]">
                <button className="h-[23px] flex-1 border border-t-[#ffb0b0] border-r-[#c04040] border-b-[#c04040] border-l-[#ffb0b0] bg-[#ff8080]">Sell</button>
                <button className="h-[23px] flex-1 border border-t-[#c8f0ff] border-r-[#6080c0] border-b-[#6080c0] border-l-[#c8f0ff] bg-[#a0c0ff]">Buy</button>
              </div>
              <button className="mt-1.5 h-[23px] w-full border border-t-[#ffffd0] border-r-[#c0c060] border-b-[#c0c060] border-l-[#ffffd0] bg-[#ffffa0]">
                Закрыть #118731867 sell 0.02 USDCAD <u>п</u>о 0.99878
              </button>
              <label className="mt-[13px] flex items-center gap-[5px]">
                <input
                  type="checkbox"
                  checked={limit}
                  onChange={e => setLimit(e.target.checked)}
                  className={clsx('h-[13px] w-[13px] appearance-none checked:bg-black', FIELD)}
                />
                Использовать максимальное отклонение от запрошенной цены
              </label>
              <div className="mt-[9px] flex items-center pl-16">
                <label htmlFor="deviation">Максимальное отклонение:</label>
                <Combo id="deviation" value="0" disabled={!limit} className="mr-1.5 ml-[5px] w-[59px]" />
                пунктов
              </div>
            </fieldset>
          </form>
        </div>
      </div>
    </div>
  );
}

function Desktop() {
  return (
    <div className="grid h-[21px] grid-cols-[1fr_auto_1fr] overflow-hidden bg-linear-to-r from-[#c4c4c2] via-[#d8d9d6] to-[#bcbfc2]">
      <span />
      <nav className="flex items-center gap-1.5 border-t border-l border-white bg-[#ebe8e2] px-[3px]">
        <svg width="164" height="16" viewBox="0 0 164 16" aria-hidden="true">
          <path d="M1 2h5l1 2h8v10H1z" fill="#a3ab8c" stroke="#6d745c" /><rect x="4" y="6" width="9" height="6" fill="#c8ccb8" stroke="#6d745c" />
          <path d="M21.500 1v14" stroke="#a8a290" />
          <rect x="29.500" y="2.500" width="13" height="11" fill="#333" stroke="#8a8a86" strokeWidth="2" /><path d="M32 6l2 2-2 2" stroke="#ddd" fill="none" />
          <rect x="51" y="2" width="11" height="12" rx="1" fill="#e2e2de" stroke="#9a9a95" /><path d="M52 8h9M55 5h3M55 11h3" stroke="#888" />
          <circle cx="76" cy="8" r="6.500" fill="#e7e9ee" stroke="#5874a0" strokeWidth="1.500" /><path d="M76 3l-4 6h2v4h4V5z" fill="#aaa" stroke="#666" />
          <path d="M89.500 1v14" stroke="#a8a290" />
          <path d="M99 3h4l1 2h7v8H99z" fill="#a7c66a" stroke="#7a8c56" />
          <path d="M118 1h24v14h-24zM149 1h15v14h-15z" fill="#fff" fillOpacity=".6" />
          <circle cx="122" cy="9" r="2.500" fill="#00a" /><ellipse cx="130" cy="8.500" rx="2" ry="3" fill="#0a0" /><path d="M137 11h3" stroke="#aa4" />
          <ellipse cx="152" cy="9" rx="2" ry="4" fill="#00f" /><circle cx="160" cy="11" r="2" fill="#d00" />
        </svg>
      </nav>
      <div className="flex items-start justify-end pr-12">
        <svg width="94" height="17" viewBox="0 0 94 17" aria-hidden="true">
          <path d="M4 5l8-5h30v9l-18-3z" fill="#222" />
          <path d="M0 11L12 0h12L15 11z" fill="#fff" stroke="#222" />
          <path d="M56 0h34l-4 15-6-3-8 2-12-2z" fill="#333" />
          <path d="M35 15L47 0h18L58 15z" fill="#fff" stroke="#222" />
        </svg>
        <span className="ml-0.5 flex gap-3 font-['DejaVu_Sans',sans-serif] text-lg leading-1.5 font-bold text-white italic [text-shadow:1px_1px_0_#000,-1px_0_0_#333]">
          <span>COM</span>
          <span>UA</span>
        </span>
      </div>
    </div>
  );
}

export default function App() {
  return (
    <div className="relative flex min-h-screen flex-col bg-[#c8c8c6] font-['DejaVu_Sans_Condensed','Noto_Sans',sans-serif] text-[11px] leading-[15px] text-black">
      <TopPanel />
      <div className="flex flex-1 flex-col border border-[#d4d0c8] border-r-[#404040] border-b-[#404040] bg-[#d4d0c8]">
        <div className="flex flex-1 flex-col border border-white border-r-[#808080] border-b-[#808080] p-0.5">
          <div className="flex h-[19px] items-center bg-linear-to-r from-[#0a246a] to-[#a6caf0] pr-0.5 pl-0.5 font-bold text-white">
            <Logo />
            <h1 className="ml-0.5">199838: Alpari NZ MT4 - [USDCAD,M15]</h1>
            <WinButtons />
          </div>
          <nav className="flex h-[19px] items-center gap-3.5 pt-px pr-0.5 pl-0.5">
            <Wine />
            {MENU.map(([before, key, after]) => (
              <button key={after} className="first-of-type:-ml-1.5">{before}<u>{key}</u>{after}</button>
            ))}
            <WinButtons small />
          </nav>
          <Toolbars />
          <div className="flex flex-1">
            <aside className="flex w-[197px] shrink-0 flex-col border-t border-[#808080]">
              <div className="flex flex-1 flex-col px-[3px] pt-0.5">
                <MarketWatch />
                <hr className="mt-[3px] mb-px -ml-[3px] border-t-[#808080] shadow-[0_1px_#fff]" />
                <div className="h-px" />
                <Navigator />
              </div>
              <div className="mt-0.5 h-0.5 border-t border-b border-t-[#808080] border-b-white" />
            </aside>
            <main className="mr-px flex min-w-0 flex-1 flex-col">
              <div className="flex flex-1 flex-col border border-t-[#808080] border-r-white border-b-white border-l-[#808080]">
                <PriceChart />
              </div>
              <ChartTabs />
            </main>
          </div>
          <Terminal />
          <StatusBar />
        </div>
      </div>
      <Desktop />
      <OrderDialog />
    </div>
  );
}
